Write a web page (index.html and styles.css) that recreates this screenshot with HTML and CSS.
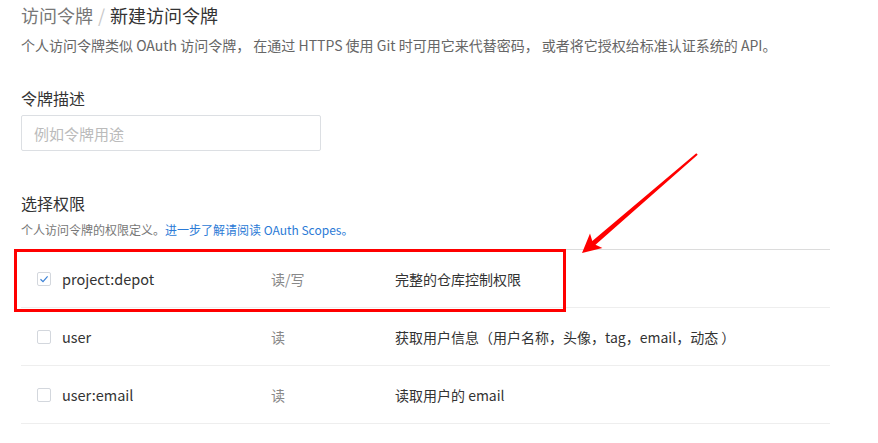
FILE: index.html
```html
<!DOCTYPE html>
<html lang="zh-CN">
<head>
<meta charset="utf-8">
<title>新建访问令牌</title>
<link rel="stylesheet" href="styles.css">
</head>
<body>
<div class="page">
  <h1 class="crumbs"><span class="crumb-parent">访问令牌</span><span class="crumb-sep">/</span><span class="crumb-current">新建访问令牌</span></h1>
  <p class="intro">个人访问令牌类似 OAuth 访问令牌， 在通过 HTTPS 使用 Git 时可用它来代替密码， 或者将它授权给标准认证系统的 API。</p>

  <label class="field-label" for="desc">令牌描述</label>
  <input id="desc" class="text-input" type="text" placeholder="例如令牌用途">

  <h2 class="section-title">选择权限</h2>
  <p class="hint">个人访问令牌的权限定义。<a class="link" href="#">进一步了解请阅读 OAuth Scopes。</a></p>

  <div class="scopes">
    <div class="scope-row">
      <span class="check checked"><svg viewBox="0 0 14 14" width="14" height="14"><path d="M3.5 7.2 L6 9.6 L10.6 4.4" fill="none" stroke="#3b82d6" stroke-width="1.2"/></svg></span>
      <span class="scope-name">project:depot</span>
      <span class="scope-access">读/写</span>
      <span class="scope-desc">完整的仓库控制权限</span>
    </div>
    <div class="scope-row">
      <span class="check"></span>
      <span class="scope-name">user</span>
      <span class="scope-access">读</span>
      <span class="scope-desc">获取用户信息（用户名称，头像，tag，email，动态 ）</span>
    </div>
    <div class="scope-row">
      <span class="check"></span>
      <span class="scope-name">user:email</span>
      <span class="scope-access">读</span>
      <span class="scope-desc">读取用户的 email</span>
    </div>
  </div>

  <div class="highlight-box"></div>
  <svg class="arrow" width="878" height="443" viewBox="0 0 878 443">
    <polygon fill="#ff0000" points="697.7,154.8 595.5,244.7 602.4,248 582,253 590,233.6 592.3,240.9 696.3,153.2"/>
  </svg>
</div>
</body>
</html>
```

FILE: styles.css
```css
* { box-sizing: border-box; }
html, body { margin: 0; padding: 0; background: #fff; }
body {
  font-family: "Noto Sans CJK SC", "Open Sans", sans-serif;
  color: #333;
}
.page {
  position: relative;
  width: 878px;
  height: 443px;
  overflow: hidden;
  padding-left: 21px;
  display: flex;
  flex-direction: column;
  align-items: flex-start;
}
.crumbs {
  margin: 3px 0 0;
  font-size: 18px;
  line-height: 24px;
  font-weight: normal;
  display: flex;
}
.crumb-parent { color: #777; }
.crumb-sep { color: #c8c8c8; margin: 0 5px; }
.crumb-current { color: #333; }
.intro {
  margin: 8px 0 0;
  font-size: 14px;
  line-height: 20px;
  color: #666;
}
.field-label {
  margin-top: 32px;
  font-size: 16px;
  line-height: 22px;
  color: #333;
}
.text-input {
  margin-top: 6px;
  width: 300px;
  height: 36px;
  border: 1px solid #dcdfe3;
  border-radius: 2px;
  padding: 0 12px;
  font-family: inherit;
  font-size: 15px;
  color: #333;
  outline: none;
}
.text-input::placeholder { color: #bbb; }
.section-title {
  margin: 41px 0 0;
  font-size: 16px;
  line-height: 22px;
  font-weight: normal;
  color: #333;
}
.hint {
  margin: 7px 0 0;
  font-size: 12px;
  line-height: 18px;
  color: #777;
}
.link { color: #2b7ad6; text-decoration: none; }
.scopes {
  margin-top: 10px;
  width: 809px;
  border-top: 1px solid #dcdcdc;
}
.scope-row {
  height: 58px;
  border-bottom: 1px solid #eee;
  display: grid;
  grid-template-columns: 14px 220px 124px 1fr;
  align-items: center;
  padding-left: 16px;
  font-size: 14px;
}
.check {
  width: 14px;
  height: 14px;
  border: 1px solid #d3d7dd;
  border-radius: 2px;
  display: flex;
  align-items: center;
  justify-content: center;
  background: #fff;
}
.check svg { display: block; margin: -1px; }
.scope-name {
  padding-left: 11px;
  color: #333;
  font-size: 14.5px;
}
.scope-access { color: #888; }
.scope-desc { color: #333; font-size: 14px; }
.highlight-box {
  position: absolute;
  left: 14px;
  top: 249px;
  width: 552px;
  height: 63px;
  border: 3px solid #ff0000;
}
.arrow {
  position: absolute;
  left: 0;
  top: 0;
  pointer-events: none;
}
```
